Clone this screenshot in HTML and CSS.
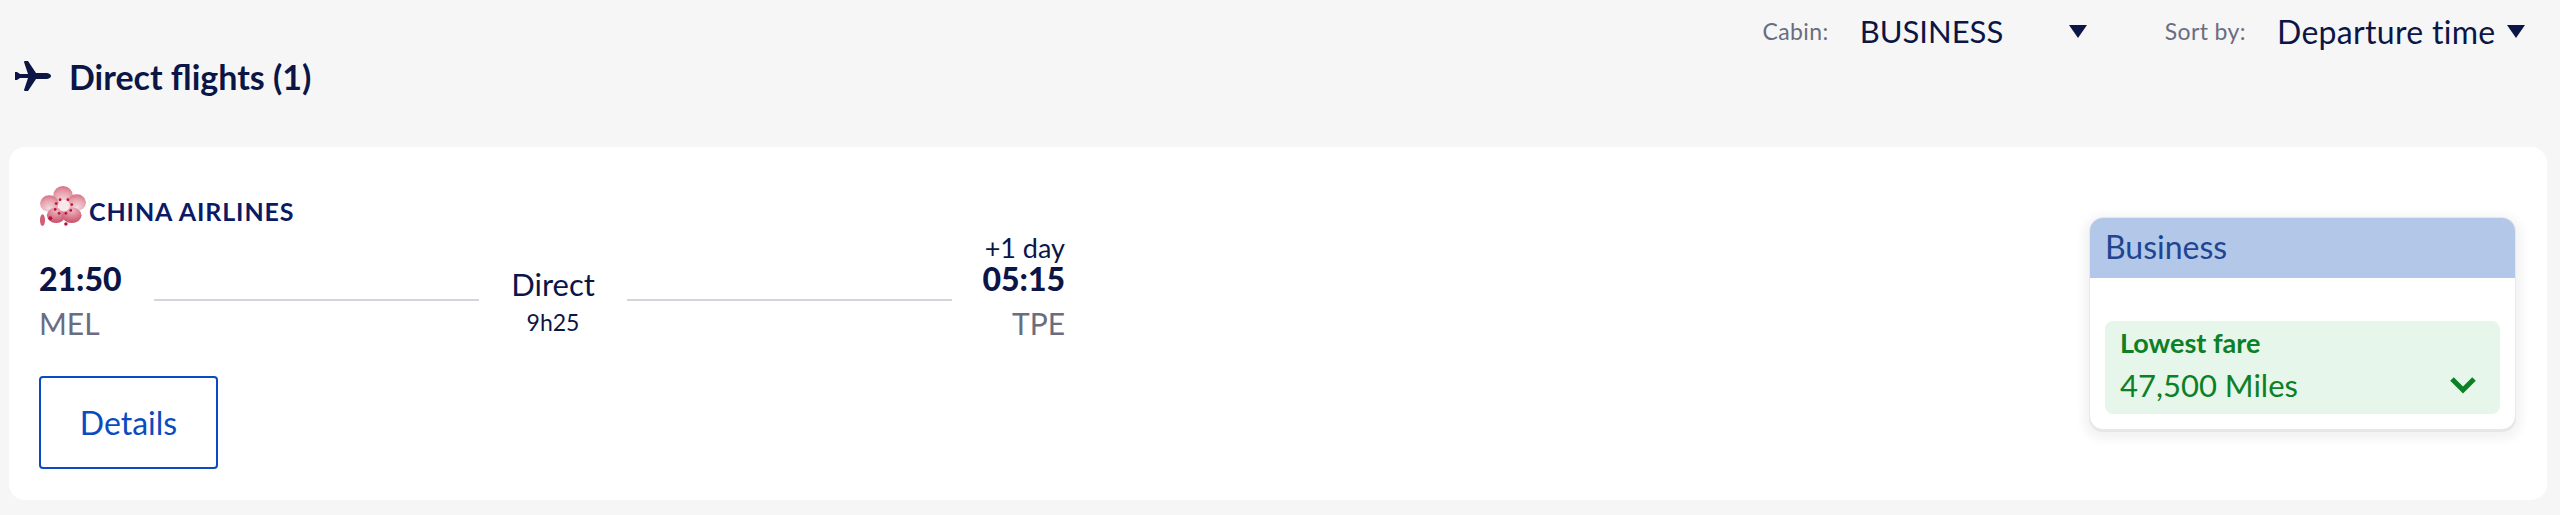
FILE: index.html
```html
<!DOCTYPE html>
<html lang="en">
<head>
<meta charset="UTF-8" />
<title>Direct flights</title>
<link rel="stylesheet" href="styles.css">
</head>
<body>

<div class="filters">
  <div class="filter cabin">
    <span class="filter-label">Cabin:</span>
    <span class="filter-value">BUSINESS</span>
    <span class="caret"></span>
  </div>
  <div class="filter sort">
    <span class="filter-label">Sort by:</span>
    <span class="filter-value">Departure time</span>
    <span class="caret"></span>
  </div>
</div>

<h1 class="title">
  <svg class="plane" viewBox="0 0 36 30" aria-hidden="true">
    <path d="M0 11 L2 11 L5 13 L13 13 L9 1 Q9 0 10 0 L13 0 L21 12 L32 12 Q36 13 36 15 Q36 17 32 18 L21 18 L13 30 L10 30 Q9 30 9 29 L13 17 L5 17 L2 19 L0 19 Z" />
  </svg>
  <span>Direct flights (1)</span>
</h1>

<div class="card">
  <div class="flight">
    <div class="airline">
      <svg class="flower" viewBox="0 0 48 42" aria-hidden="true">
        <defs>
          <radialGradient id="petal" cx="50%" cy="80%" r="85%">
            <stop offset="0%" stop-color="#f4dadf" />
            <stop offset="60%" stop-color="#e7a0ad" />
            <stop offset="100%" stop-color="#d4687e" />
          </radialGradient>
          <radialGradient id="petal-low" cx="50%" cy="20%" r="90%">
            <stop offset="0%" stop-color="#ecb8c2" />
            <stop offset="100%" stop-color="#c63f5b" />
          </radialGradient>
        </defs>
        <ellipse cx="24" cy="10" rx="10" ry="10" fill="url(#petal)" />
        <ellipse cx="10" cy="18" rx="9.5" ry="8.5" fill="url(#petal)" />
        <ellipse cx="38" cy="17" rx="9.5" ry="8.5" fill="url(#petal)" />
        <ellipse cx="17" cy="30" rx="9.5" ry="8" fill="url(#petal-low)" />
        <ellipse cx="33" cy="30" rx="10" ry="8" fill="url(#petal-low)" />
        <circle cx="25" cy="20" r="6" fill="#f8e8ea" />
        <g fill="#b8143a">
          <circle cx="17" cy="18" r="1.4" />
          <circle cx="21" cy="14" r="1.4" />
          <circle cx="29" cy="14" r="1.4" />
          <circle cx="33" cy="19" r="1.4" />
          <circle cx="16" cy="24" r="1.4" />
          <circle cx="20" cy="28" r="1.4" />
          <circle cx="27" cy="28" r="1.4" />
          <circle cx="32" cy="25" r="1.4" />
          <circle cx="11" cy="33" r="2" />
          <circle cx="27" cy="39" r="1.8" />
        </g>
        <ellipse cx="3" cy="35" rx="2.6" ry="6" fill="#cf5f75" />
      </svg>
      <span class="airline-name">CHINA AIRLINES</span>
    </div>

    <div class="route">
      <div class="stop">
        <div class="time">21:50</div>
        <div class="code">MEL</div>
      </div>
      <div class="path">
        <div class="line"></div>
        <div class="path-info">
          <div class="path-type">Direct</div>
          <div class="duration">9h25</div>
        </div>
        <div class="line"></div>
      </div>
      <div class="stop stop-arrive">
        <div class="next-day">+1 day</div>
        <div class="time">05:15</div>
        <div class="code">TPE</div>
      </div>
    </div>

    <button class="details-btn" type="button">Details</button>
  </div>

  <div class="fare">
    <div class="fare-head">Business</div>
    <div class="fare-body">
      <div class="fare-box">
        <div class="fare-label">Lowest fare</div>
        <div class="fare-row">
          <span class="fare-price">47,500 Miles</span>
          <svg class="chevron" viewBox="0 0 26 18" aria-hidden="true">
            <path d="M2 3 L13 14 L24 3" />
          </svg>
        </div>
      </div>
    </div>
  </div>
</div>

</body>
</html>
```

FILE: styles.css
```css
* {
  box-sizing: border-box;
}
body {
  margin: 0;
  padding: 0 13px 15px 9px;
  height: 515px;
  overflow: hidden;
  background: #f6f6f6;
  color: #0b1647;
  font-family: Lato, 'Open Sans', sans-serif;
}

/* Top filters */
.filters {
  display: flex;
  justify-content: flex-end;
  gap: 78px;
  height: 32px;
  margin-top: 15px;
  padding-right: 22px;
  align-items: center;
}
.filter {
  display: flex;
  align-items: center;
}
.filter-label {
  font-size: 23px;
  color: #6a6d80;
  letter-spacing: 0.4px;
}
.filter-value {
  font-size: 31px;
}
.cabin .filter-label {
  margin-right: 31px;
}
.cabin .filter-value {
  width: 209px;
}
.sort .filter-label {
  margin-right: 31px;
}
.sort .filter-value {
  width: 230px;
  font-size: 32px;
  letter-spacing: 0.3px;
}
.caret {
  width: 0;
  height: 0;
  border-left: 9.5px solid transparent;
  border-right: 9.5px solid transparent;
  border-top: 13px solid #0b1647;
}

.title {
  display: flex;
  align-items: center;
  gap: 18px;
  margin: 0;
  padding-left: 6px;
  height: 58px;
  font-size: 34px;
  font-weight: 700;
}
.plane {
  width: 36px;
  height: 30px;
  fill: #0b1647;
}

/* Flight card */
.card {
  display: flex;
  justify-content: space-between;
  align-items: center;
  height: 353px;
  margin-top: 42px;
  padding: 40px 31px 29px 30px;
  background: #fff;
  border-radius: 16px;
}
.flight {
  width: 1026px;
  margin-bottom: 4px;
}
.airline {
  display: flex;
  align-items: flex-end;
  height: 41px;
}
.flower {
  width: 48px;
  height: 41px;
}
.airline-name {
  margin-left: 2px;
  margin-bottom: 3px;
  font-size: 25px;
  font-weight: 700;
  line-height: 25px;
  letter-spacing: 0.9px;
  color: #0c1a66;
}
.route {
  display: flex;
  align-items: flex-end;
  margin-top: 6px;
}
.stop {
  width: 115px;
  padding-bottom: 3px;
}
.stop-arrive {
  width: 113px;
  text-align: right;
}
.next-day {
  margin-bottom: -3px;
  font-size: 27px;
  line-height: 30px;
}
.time {
  font-size: 32px;
  font-weight: 900;
  line-height: 38px;
}
.code {
  margin-top: 6px;
  font-size: 30px;
  line-height: 38px;
  color: #6a6d80;
}
.path {
  flex: 1;
  display: flex;
  align-items: center;
  margin-bottom: 7px;
}
.line {
  flex: 1;
  height: 2px;
  background: #d4d5da;
}
.path-info {
  width: 148px;
  text-align: center;
}
.path-type {
  font-size: 31px;
  line-height: 44px;
}
.duration {
  font-size: 23px;
  line-height: 32px;
}
.details-btn {
  display: block;
  width: 179px;
  height: 93px;
  margin-top: 31px;
  background: #fff;
  border: 2px solid #0a4bbf;
  border-radius: 4px;
  color: #0a4bbf;
  font-family: inherit;
  font-size: 32px;
}

/* Fare column */
.fare {
  width: 427px;
  height: 213px;
  margin-bottom: 11px;
  border-radius: 14px;
  background: #fff;
  border: 1px solid #e8e8ea;
  box-shadow: 0 2px 0 #e6e6e8, 0 4px 10px 6px #f4f4f4;
  overflow: hidden;
}
.fare-head {
  height: 60px;
  padding-left: 15px;
  background: #b3c7e8;
  color: #1f4592;
  font-size: 32px;
  line-height: 58px;
}
.fare-body {
  padding: 43px 15px 0;
}
.fare-box {
  height: 93px;
  padding: 4px 15px;
  background: #e7f6ea;
  border-radius: 8px;
  color: #0c8025;
}
.fare-label {
  font-size: 27px;
  font-weight: 700;
  line-height: 36px;
}
.fare-row {
  display: flex;
  justify-content: space-between;
  align-items: center;
  margin-top: 3px;
  padding-right: 9px;
}
.fare-price {
  font-size: 31px;
  line-height: 42px;
}
.chevron {
  width: 26px;
  height: 18px;
  fill: none;
  stroke: #0c8025;
  stroke-width: 5;
}
```
